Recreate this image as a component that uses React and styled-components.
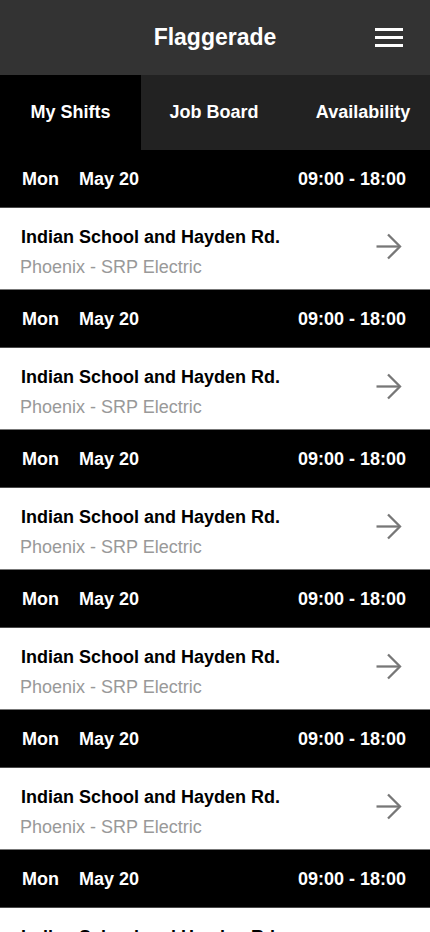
import React from "react";
import styled, { createGlobalStyle } from "styled-components";

const GlobalStyle = createGlobalStyle`
  html, body { margin: 0; padding: 0; background: #ffffff; }
  body { font-family: "Liberation Sans", Arial, sans-serif; -webkit-font-smoothing: antialiased; }
  * { box-sizing: border-box; }
`;

const Page = styled.div`
  width: 430px;
  height: 932px;
  overflow: hidden;
  background: #ffffff;
`;

const Header = styled.header`
  position: relative;
  height: 75px;
  background: #333333;
  display: flex;
  align-items: center;
  justify-content: center;
`;

const Title = styled.h1`
  margin: 0;
  color: #ffffff;
  font-size: 23px;
  font-weight: 700;
`;

const MenuButton = styled.button`
  position: absolute;
  right: 27px;
  top: 28px;
  width: 28px;
  height: 19px;
  padding: 0;
  border: none;
  background: transparent;
  display: flex;
  flex-direction: column;
  justify-content: space-between;
`;

const MenuLine = styled.span`
  display: block;
  height: 3px;
  width: 100%;
  background: #ffffff;
`;

const Tabs = styled.nav`
  height: 75px;
  background: #222222;
  display: flex;
  overflow: hidden;
`;

const Tab = styled.div`
  flex: none;
  width: ${(p) => p.$width}px;
  display: flex;
  align-items: center;
  justify-content: center;
  color: #ffffff;
  font-size: 18px;
  font-weight: 700;
  white-space: nowrap;
  background: ${(p) => (p.$active ? "#000000" : "transparent")};
`;

const DateBar = styled.div`
  height: 58px;
  background: #000000;
  border-bottom: 1px solid #4a4a4a;
  display: flex;
  align-items: center;
  padding: 2px 24px 0 22px;
  color: #ffffff;
  font-size: 18px;
  font-weight: 700;
`;

const DayGroup = styled.div`
  display: flex;
  gap: 20px;
  flex: 1;
`;

const ShiftCard = styled.div`
  height: 82px;
  background: #ffffff;
  border-bottom: 1px solid #777777;
  display: flex;
  align-items: flex-start;
  padding: 17px 29px 0 20px;
`;

const ShiftInfo = styled.div`
  flex: 1;
  display: flex;
  flex-direction: column;
  font-size: 18px;
  line-height: 24px;
`;

const Location = styled.div`
  color: #000000;
  font-weight: 700;
  padding-left: 1px;
`;

const Client = styled.div`
  margin-top: 6px;
  color: #999999;
`;

const ArrowIcon = styled.svg`
  margin-top: 8px;
  margin-right: -1px;
  flex: none;
`;

const Arrow = () => (
  <ArrowIcon width="27" height="28" viewBox="0 0 27 28" fill="none">
    <path d="M1.5 13.5H25" stroke="#777777" strokeWidth="2.3" />
    <path d="M13 1.5L25 13.5L13 25.5" stroke="#777777" strokeWidth="2.3" strokeLinejoin="miter" />
  </ArrowIcon>
);

const shifts = Array.from({ length: 6 }, (_, i) => ({
  id: i,
  day: "Mon",
  date: "May 20",
  time: "09:00 - 18:00",
  location: "Indian School and Hayden Rd.",
  client: "Phoenix - SRP Electric",
}));

export default function App() {
  return (
    <Page>
      <GlobalStyle />
      <Header>
        <Title>Flaggerade</Title>
        <MenuButton aria-label="Menu">
          <MenuLine />
          <MenuLine />
          <MenuLine />
        </MenuButton>
      </Header>
      <Tabs>
        <Tab $active $width={141}>My Shifts</Tab>
        <Tab $width={146}>Job Board</Tab>
        <Tab $width={152}>Availability</Tab>
      </Tabs>
      {shifts.map((s) => (
        <React.Fragment key={s.id}>
          <DateBar>
            <DayGroup>
              <span>{s.day}</span>
              <span>{s.date}</span>
            </DayGroup>
            <span>{s.time}</span>
          </DateBar>
          <ShiftCard>
            <ShiftInfo>
              <Location>{s.location}</Location>
              <Client>{s.client}</Client>
            </ShiftInfo>
            <Arrow />
          </ShiftCard>
        </React.Fragment>
      ))}
    </Page>
  );
}
